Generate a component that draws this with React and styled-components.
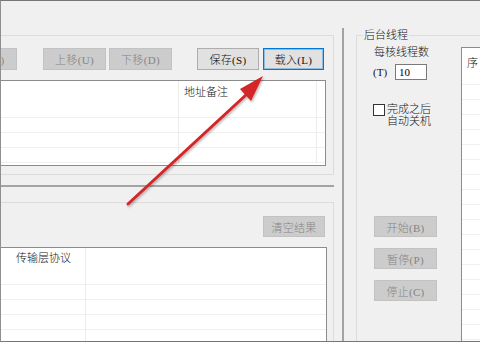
import React from "react";
import styled, { createGlobalStyle } from "styled-components";

const FONT = `"Liberation Serif", "Noto Sans CJK SC", serif`;

const Global = createGlobalStyle`
  html, body { margin: 0; padding: 0; background: #f0f0f0; }
  * { box-sizing: border-box; }
`;

const Frame = styled.div`
  position: relative;
  width: 480px;
  height: 342px;
  overflow: hidden;
  background: #f0f0f0;
  border-top: 1px solid #767676;
  border-left: 1px solid #8f8f8f;
  border-bottom: 1px solid #767676;
  display: flex;
  font-family: ${FONT};
  font-size: 11px;
  font-weight: 300;
  color: #111;
`;

const LeftCol = styled.div`
  width: 333px;
  flex: none;
  display: flex;
  flex-direction: column;
`;

const TopGroup = styled.div`
  margin-top: 34px;
  height: 140px;
  border-top: 1px solid #dcdcdc;
  border-right: 1px solid #dcdcdc;
  border-bottom: 1px solid #dcdcdc;
  padding-top: 12px;
  display: flex;
  flex-direction: column;
`;

const ButtonRow = styled.div`
  display: flex;
  margin-left: ${(p) => p.$ml || 0}px;
  justify-content: ${(p) => (p.$end ? "flex-end" : "flex-start")};
`;

const Btn = styled.div`
  flex: none;
  width: ${(p) => p.$w || 63}px;
  height: ${(p) => p.$h || 22}px;
  margin-left: ${(p) => p.$ml || 0}px;
  display: flex;
  align-items: center;
  justify-content: center;
  font-size: 11px;
  letter-spacing: 0.3px;
  white-space: nowrap;
  background: ${(p) => (p.$disabled ? "#cccccc" : "#e1e1e1")};
  border: 1px solid
    ${(p) => (p.$focus ? "#0078d7" : p.$disabled ? "#c2c2c2" : "#adadad")};
  box-shadow: ${(p) => (p.$focus ? "inset 0 0 0 1px rgba(0,120,215,0.35)" : "none")};
  color: ${(p) => (p.$disabled ? "#858585" : "#111")};
`;

const Table = styled.div`
  background: #fff;
  border: 1px solid #8c8c8c;
  border-left: ${(p) => (p.$noLeft ? "none" : "1px solid #8c8c8c")};
  border-right: ${(p) => (p.$noRight ? "none" : "1px solid #8c8c8c")};
  border-bottom: ${(p) => (p.$noBottom ? "none" : "1px solid #8c8c8c")};
  width: ${(p) => (p.$w ? `${p.$w}px` : "auto")};
  height: ${(p) => (p.$h ? `${p.$h}px` : "auto")};
  margin-top: ${(p) => p.$mt || 0}px;
  margin-right: ${(p) => p.$mr || 0}px;
  flex: ${(p) => (p.$grow ? 1 : "none")};
  overflow: hidden;
  display: grid;
  grid-template-columns: ${(p) => p.$cols};
  grid-auto-rows: 15px;
  grid-template-rows: ${(p) => p.$head}px;
  align-content: start;
`;

const HeadCell = styled.div`
  height: ${(p) => p.$h}px;
  padding-left: ${(p) => p.$pl}px;
  padding-top: ${(p) => p.$pt}px;
  line-height: 13px;
  white-space: nowrap;
  border-left: ${(p) => (p.$first ? "none" : "1px solid #ececec")};
`;

const Cell = styled.div`
  border-bottom: 1px solid #f0f0f0;
  border-left: ${(p) => (p.$first ? "none" : "1px solid #ececec")};
`;

const HSplit = styled.div`
  margin-top: 10px;
  height: 2px;
  background: #a3a3a3;
`;

const BottomGroup = styled.div`
  margin-top: 15px;
  flex: 1;
  min-height: 0;
  border-top: 1px solid #dcdcdc;
  border-right: 1px solid #dcdcdc;
  padding: 13px 8px 0 0;
  display: flex;
  flex-direction: column;
`;

const VSplit = styled.div`
  flex: none;
  width: 2px;
  margin: 27px 0 0 8px;
  background: #a3a3a3;
`;

const RightCol = styled.div`
  flex: 1;
  padding-left: 12px;
  display: flex;
  flex-direction: column;
`;

const RightGroup = styled.div`
  margin-top: 34px;
  flex: 1;
  border-top: 1px solid #dcdcdc;
  border-left: 1px solid #dcdcdc;
  display: flex;
  flex-direction: column;
`;

const Legend = styled.div`
  align-self: flex-start;
  margin: -7px 0 0 6px;
  padding: 0 1px;
  height: 13px;
  line-height: 13px;
  background: #f0f0f0;
`;

const GroupBody = styled.div`
  flex: 1;
  display: flex;
`;

const Controls = styled.div`
  width: 104px;
  flex: none;
  padding-left: 16px;
  display: flex;
  flex-direction: column;
`;

const PerCore = styled.div`
  margin-top: 4px;
  padding-left: 1px;
  line-height: 12px;
  white-space: nowrap;
`;

const TRow = styled.div`
  margin-top: 6px;
  height: 16px;
  display: flex;
  align-items: center;
`;

const TLabel = styled.span`
  width: 22px;
  flex: none;
  white-space: nowrap;
`;

const NumBox = styled.input`
  width: 32px;
  height: 16px;
  border: 1px solid #7a7a7a;
  background: #fff;
  padding: 0 3px;
  margin: 0;
  font-family: ${FONT};
  font-size: 11px;
  color: #000;
  outline: none;
`;

const CheckRow = styled.div`
  margin-top: 23px;
  display: flex;
  align-items: flex-start;
`;

const CheckBox = styled.span`
  width: 12px;
  height: 12px;
  margin-top: 1px;
  flex: none;
  border: 1px solid #333;
  background: #fff;
`;

const CheckText = styled.span`
  margin-left: 2px;
  font-size: 11px;
  line-height: 12px;
  white-space: nowrap;
`;

const ButtonStack = styled.div`
  margin: 89px 0 0 1px;
  display: flex;
  flex-direction: column;
  gap: 11px;
`;

const Overlay = styled.svg`
  position: absolute;
  left: -1px;
  top: -1px;
  pointer-events: none;
`;

function GridTable({ cols, widths, head, headPad, rows, ...rest }) {
  const cells = [];
  cols.forEach((c, i) =>
    cells.push(
      <HeadCell key={`h${i}`} $first={i === 0} $h={head} $pl={headPad[0]} $pt={headPad[1]}>
        {c}
      </HeadCell>
    )
  );
  for (let r = 0; r < rows; r++) {
    cols.forEach((_, i) => cells.push(<Cell key={`${r}-${i}`} $first={i === 0} />));
  }
  return (
    <Table $cols={widths} $head={head} {...rest}>
      {cells}
    </Table>
  );
}

export default function App() {
  return (
    <>
      <Global />
      <Frame>
        <LeftCol>
          <TopGroup>
            <ButtonRow $ml={-47}>
              <Btn $disabled>删除(R)</Btn>
              <Btn $disabled $ml={26}>上移(U)</Btn>
              <Btn $disabled $ml={3}>下移(D)</Btn>
              <Btn $w={62} $ml={25}>保存(S)</Btn>
              <Btn $w={61} $ml={4} $focus>载入(L)</Btn>
            </ButtonRow>
            <GridTable
              $noLeft
              $w={325}
              $h={86}
              $mt={10}
              cols={["", "地址备注", ""]}
              widths="177px 138px 1fr"
              head={22}
              headPad={[5, 5]}
              rows={4}
            />
          </TopGroup>
          <HSplit />
          <BottomGroup>
            <ButtonRow $end>
              <Btn $disabled $w={62} $h={21}>清空结果</Btn>
            </ButtonRow>
            <GridTable
              $noLeft
              $noBottom
              $grow
              $mt={10}
              $mr={-2}
              cols={["传输层协议", ""]}
              widths="84px 1fr"
              head={22}
              headPad={[15, 4]}
              rows={6}
            />
          </BottomGroup>
        </LeftCol>
        <VSplit />
        <RightCol>
          <RightGroup>
            <Legend>后台线程</Legend>
            <GroupBody>
              <Controls>
                <PerCore>每核线程数</PerCore>
                <TRow>
                  <TLabel>(T)</TLabel>
                  <NumBox defaultValue="10" readOnly />
                </TRow>
                <CheckRow>
                  <CheckBox />
                  <CheckText>
                    完成之后
                    <br />
                    自动关机
                  </CheckText>
                </CheckRow>
                <ButtonStack>
                  <Btn $disabled $h={21}>开始(B)</Btn>
                  <Btn $disabled $h={21}>暂停(P)</Btn>
                  <Btn $disabled $h={21}>停止(C)</Btn>
                </ButtonStack>
              </Controls>
              <GridTable
                $noRight
                $noBottom
                $grow
                $mt={5}
                cols={["序"]}
                widths="1fr"
                head={22}
                headPad={[5, 9]}
                rows={18}
              />
            </GroupBody>
          </RightGroup>
        </RightCol>
        <Overlay width="480" height="342" viewBox="0 0 480 342">
          <defs>
            <filter id="sh" x="-20%" y="-20%" width="140%" height="140%">
              <feDropShadow dx="1" dy="1.5" stdDeviation="1" floodColor="#000" floodOpacity="0.3" />
            </filter>
          </defs>
          <g filter="url(#sh)">
            <line x1="128" y1="204" x2="247" y2="94" stroke="#d42525" strokeWidth="3" strokeLinecap="round" />
            <polygon points="263,76 240,89 251,101" fill="#d42525" />
          </g>
        </Overlay>
      </Frame>
    </>
  );
}
